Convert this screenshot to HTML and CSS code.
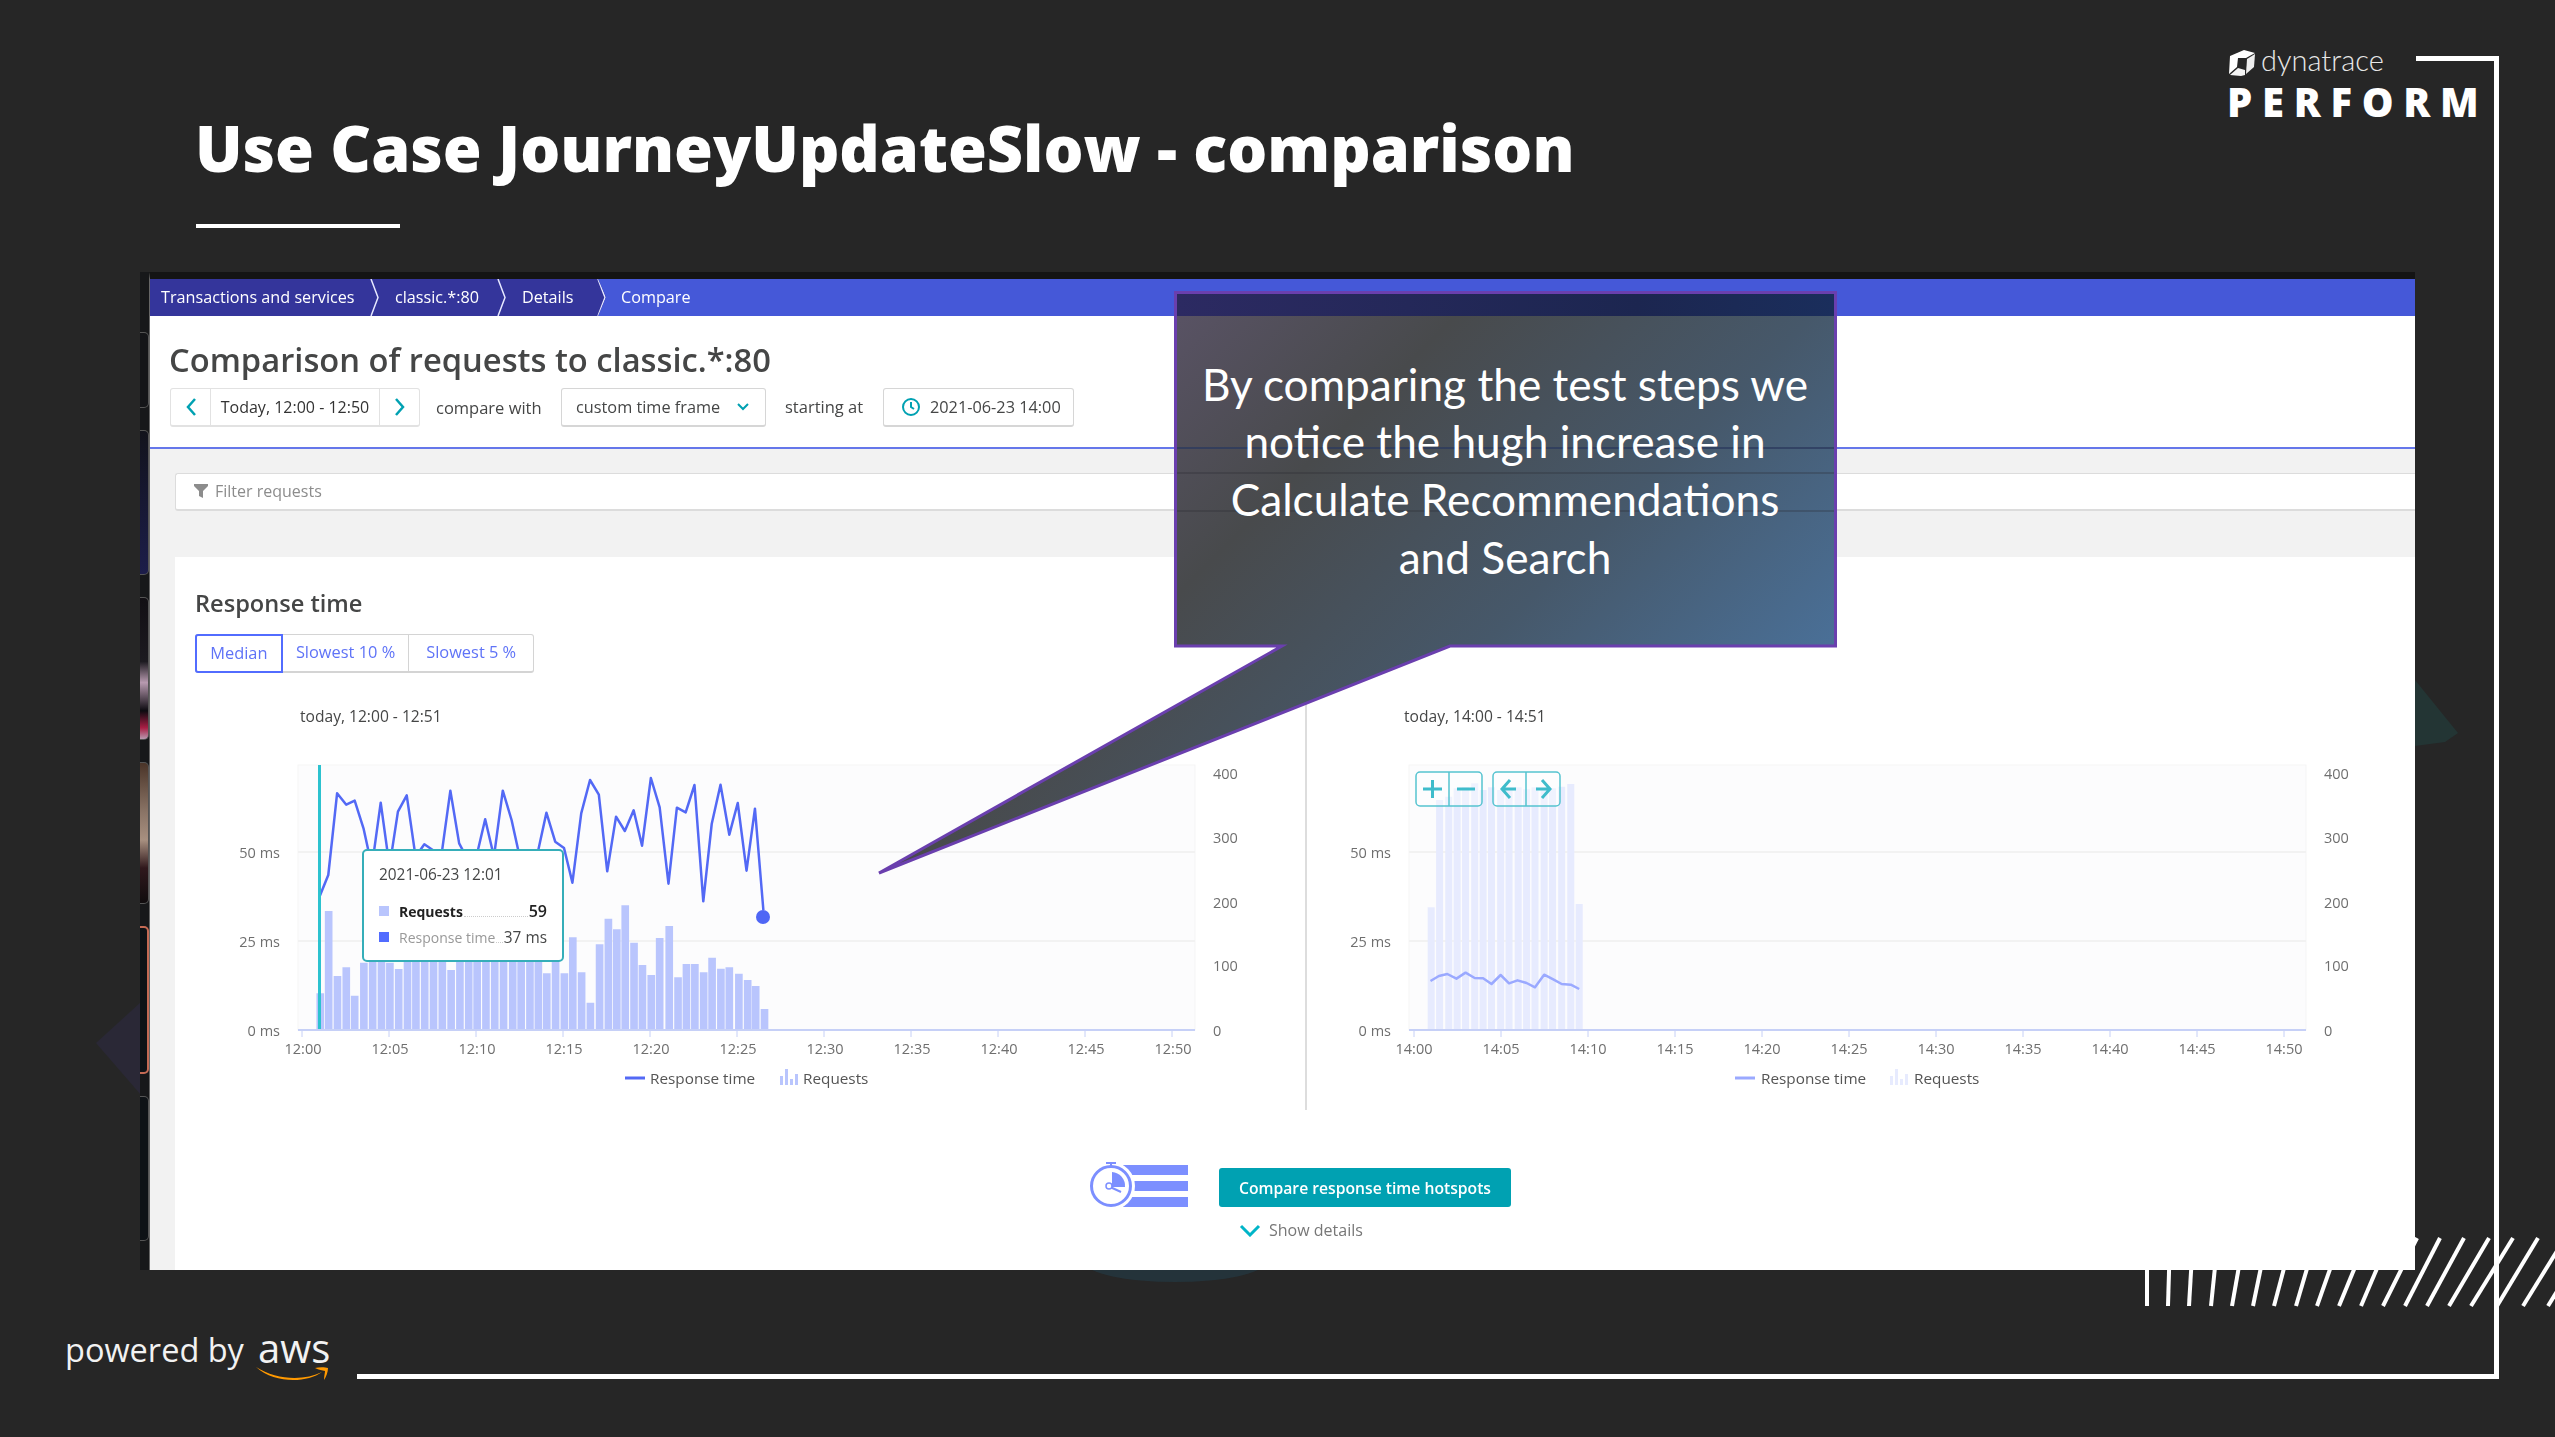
FILE: index.html
```html
<!DOCTYPE html>
<html lang="en">
<head>
    <meta charset="UTF-8">
    <title>Use Case JourneyUpdateSlow - comparison</title>
    <link rel="stylesheet" href="styles.css">
</head>
<body>
    <!-- slide decoration: faint shapes, hatching, white frame -->
    <svg class="backdrop" viewBox="0 0 2555 1437">
        <polygon points="96,1043 141,1002 141,1095" fill="#2a2836"/>
        <polygon points="2415,680 2458,733 2445,742 2415,746" fill="#233534"/>
        <ellipse cx="1175" cy="1262" rx="90" ry="20" fill="#24333a"/>
        <g stroke="#fff" stroke-width="4">
            <line x1="2147" y1="1306" x2="2147" y2="1238"/>
            <line x1="2168" y1="1306" x2="2170" y2="1238"/>
            <line x1="2189" y1="1306" x2="2193" y2="1238"/>
            <line x1="2211" y1="1306" x2="2218" y2="1238"/>
            <line x1="2232" y1="1306" x2="2244" y2="1238"/>
            <line x1="2253" y1="1306" x2="2267" y2="1238"/>
            <line x1="2274" y1="1306" x2="2292" y2="1238"/>
            <line x1="2296" y1="1306" x2="2316" y2="1238"/>
            <line x1="2317" y1="1306" x2="2341" y2="1238"/>
            <line x1="2339" y1="1306" x2="2367" y2="1238"/>
            <line x1="2361" y1="1306" x2="2390" y2="1238"/>
            <line x1="2383" y1="1306" x2="2417" y2="1238"/>
            <line x1="2405" y1="1306" x2="2440" y2="1238"/>
            <line x1="2427" y1="1306" x2="2464" y2="1238"/>
            <line x1="2449" y1="1306" x2="2489" y2="1238"/>
            <line x1="2471" y1="1306" x2="2513" y2="1238"/>
            <line x1="2497" y1="1306" x2="2538" y2="1238"/>
            <line x1="2523" y1="1306" x2="2565" y2="1238"/>
            <line x1="2548" y1="1306" x2="2590" y2="1238"/>
        </g>
        <path d="M2416 58.500H2496.500V1376.500H357" fill="none" stroke="#fff" stroke-width="5"/>
    </svg>

    <header class="slide-head">
        <div class="slide-title">
            <h1>Use Case JourneyUpdateSlow - comparison</h1>
            <div class="title-rule"></div>
        </div>
        <div class="brand">
            <div class="brand-top">
                <svg class="brand-cube" viewBox="0 0 27 26">
                    <path d="M2 6 16 0l11 3-9 5-8 0-1 9-8 7z" fill="#fff"/>
                    <path d="M19 9l8-5-1 13-8 7z" fill="#eee"/>
                    <path d="M2 25l8-7 7 2v5l-4 1z" fill="#f4f4f4"/>
                </svg>
                <span class="brand-name">dynatrace</span>
            </div>
            <div class="brand-event">PERFORM</div>
        </div>
    </header>

    <div class="screen-row">
        <div class="thumbs">
            <div class="thumb thumb-1"></div>
            <div class="thumb thumb-2"></div>
            <div class="thumb thumb-3"></div>
            <div class="thumb thumb-4"></div>
            <div class="thumb thumb-5"></div>
            <div class="thumb thumb-6"></div>
        </div>
        <div class="screen">
            <nav class="navbar">
                <div class="crumbs">
                    <a class="crumb crumb-first">Transactions and services</a>
                    <svg class="crumb-sep" viewBox="0 0 10 37"><path d="M1 0l7 18.500L1 37"/></svg>
                    <a class="crumb crumb-second">classic.*:80</a>
                    <svg class="crumb-sep" viewBox="0 0 10 37"><path d="M1 0l7 18.500L1 37"/></svg>
                    <a class="crumb crumb-third">Details</a>
                    <svg class="crumb-sep" viewBox="0 0 10 37"><path d="M1 0l7 18.500L1 37"/></svg>
                </div>
                <a class="crumb crumb-current">Compare</a>
            </nav>

            <section class="page-head">
                <h2>Comparison of requests to classic.*:80</h2>
                <div class="controls">
                    <div class="date-nav">
                        <span class="date-arrow">
                            <svg viewBox="0 0 12 20"><path d="M10 2 3 10l7 8"/></svg>
                        </span>
                        <span class="date-value">Today, 12:00 - 12:50</span>
                        <span class="date-arrow">
                            <svg viewBox="0 0 12 20"><path d="M2 2l7 8-7 8"/></svg>
                        </span>
                    </div>
                    <span class="control-label label-compare">compare with</span>
                    <div class="select-box">
                        <span>custom time frame</span>
                        <svg viewBox="0 0 12 8"><path d="M1 1l5 5 5-5"/></svg>
                    </div>
                    <span class="control-label label-start">starting at</span>
                    <div class="time-box">
                        <svg viewBox="0 0 20 20">
                            <circle cx="10" cy="10" r="8"/>
                            <path d="M10 5v5l3 2"/>
                        </svg>
                        <span>2021-06-23 14:00</span>
                    </div>
                </div>
            </section>

            <main class="content">
                <div class="filter-bar">
                    <svg viewBox="0 0 14 14"><path d="M0 0h14v2L9 7v7L5 12V7L0 2z"/></svg>
                    <span>Filter requests</span>
                </div>

                <section class="card">
                    <h3>Response time</h3>
                    <div class="tabs">
                        <span class="tab tab-active">Median</span>
                        <span class="tab tab-ten">Slowest 10 %</span>
                        <span class="tab tab-five">Slowest 5 %</span>
                    </div>

                    <div class="charts">
                        <div class="chart-panel chart-left">
                            <svg class="chart" width="1130" height="420" viewBox="175 700 1130 420">
                                <text class="date" x="300" y="722">today, 12:00 - 12:51</text>
                                <rect class="plot" x="298" y="765" width="897" height="265"/>
                                <path class="grid" d="M298 852H1195M298 941H1195"/>
                                <svg x="220" y="700" width="600" height="420" viewBox="0 0 1568 1260" preserveAspectRatio="none">
                                    <path class="bars" d="M252 990V880h20V990zM274 990V633h20V990zM297 990V828h20V990zM320 990V802h20V990zM342 990V887h20V990zM366 990V788h20V990zM389 990V760h20V990zM412 990V760h20V990zM434 990V788h20V990zM457 990V807h20V990zM480 990V785h20V990zM502 990V760h20V990zM525 990V760h20V990zM548 990V785h20V990zM571 990V785h20V990zM594 990V810h20V990zM617 990V785h20V990zM640 990V760h20V990zM662 990V760h20V990zM685 990V760h20V990zM708 990V760h20V990zM731 990V785h20V990zM755 990V760h20V990zM777 990V785h20V990zM800 990V760h20V990zM822 990V785h20V990zM844 990V820h20V990zM867 990V785h20V990zM890 990V820h20V990zM912 990V712h20V990zM935 990V817h20V990zM958 990V908h20V990zM982 990V733h20V990zM1005 990V656h20V990zM1027 990V688h20V990zM1049 990V616h20V990zM1072 990V728h20V990zM1094 990V795h20V990zM1117 990V825h20V990zM1139 990V714h20V990zM1164 990V678h20V990zM1187 990V832h20V990zM1209 990V792h20V990zM1231 990V792h20V990zM1254 990V817h20V990zM1276 990V773h20V990zM1299 990V806h20V990zM1321 990V802h20V990zM1346 990V821h20V990zM1369 990V840h20V990zM1390 990V858h20V990zM1413 990V927h20V990z"/>
                                    <polyline class="line" points="260,590 283,525 306,280 330,314 352,302 375,385 397,500 420,308 443,500 465,335 488,286 511,470 534,433 556,450 580,455 602,272 625,430 648,480 670,470 693,358 716,470 739,272 762,360 785,480 808,470 830,460 853,338 876,425 899,444 921,548 944,340 967,240 990,284 1012,514 1035,350 1058,393 1081,331 1103,437 1126,234 1149,322 1172,551 1194,323 1217,337 1240,255 1263,604 1285,372 1308,254 1331,404 1353,309 1376,512 1398,326 1420,630"/>
                                </svg>
                                <line class="cursor" x1="319.500" y1="765" x2="319.500" y2="1030"/>
                                <circle class="dot" cx="763" cy="917" r="7"/>
                                <path class="axis" d="M298 1030H1195"/>
                                <path class="ticks" d="M302 1030v7M389 1030v7M476 1030v7M563 1030v7M650 1030v7M737 1030v7M824 1030v7M911 1030v7M998 1030v7M1085 1030v7M1172 1030v7"/>
                                <g class="y-left">
                                    <text x="280" y="858">50 ms</text>
                                    <text x="280" y="947">25 ms</text>
                                    <text x="280" y="1036">0 ms</text>
                                </g>
                                <g class="x-axis">
                                    <text x="303" y="1054">12:00</text>
                                    <text x="390" y="1054">12:05</text>
                                    <text x="477" y="1054">12:10</text>
                                    <text x="564" y="1054">12:15</text>
                                    <text x="651" y="1054">12:20</text>
                                    <text x="738" y="1054">12:25</text>
                                    <text x="825" y="1054">12:30</text>
                                    <text x="912" y="1054">12:35</text>
                                    <text x="999" y="1054">12:40</text>
                                    <text x="1086" y="1054">12:45</text>
                                    <text x="1173" y="1054">12:50</text>
                                </g>
                                <g class="y-right">
                                    <text x="1213" y="779">400</text>
                                    <text x="1213" y="843">300</text>
                                    <text x="1213" y="908">200</text>
                                    <text x="1213" y="971">100</text>
                                    <text x="1213" y="1036">0</text>
                                </g>
                                <path class="legend-line" d="M625 1078H645"/>
                                <text class="legend" x="650" y="1084">Response time</text>
                                <path class="legend-bars" d="M780 1085v-9h3v9zM785 1085v-16h3v16zM790 1085v-6h3v6zM795 1085v-11h3v11z"/>
                                <text class="legend" x="803" y="1084">Requests</text>
                            </svg>

                            <div class="tooltip">
                                <div class="tooltip-date">2021-06-23 12:01</div>
                                <div class="tooltip-row tooltip-strong">
                                    <i class="swatch swatch-bars"></i>
                                    <span>Requests</span>
                                    <b class="leader"></b>
                                    <span class="tooltip-count">59</span>
                                </div>
                                <div class="tooltip-row">
                                    <i class="swatch swatch-line"></i>
                                    <span class="muted">Response time</span>
                                    <b class="leader"></b>
                                    <span>37 ms</span>
                                </div>
                            </div>
                        </div>

                        <div class="chart-panel chart-right">
                            <svg class="chart" width="1110" height="420" viewBox="1305 700 1110 420">
                                <text class="date" x="1404" y="722">today, 14:00 - 14:51</text>
                                <rect class="plot" x="1409" y="765" width="897" height="265"/>
                                <path class="grid" d="M1409 852H2306M1409 941H2306"/>
                                <svg x="1300" y="700" width="1100" height="420" viewBox="0 0 1568 1260" preserveAspectRatio="none">
                                    <path class="bars-faded" d="M182 990V622h10V990zM194 990V300h10V990zM207 990V290h10V990zM219 990V265h10V990zM231 990V262h10V990zM244 990V250h10V990zM256 990V270h10V990zM268 990V262h10V990zM281 990V270h10V990zM293 990V265h10V990zM306 990V262h10V990zM318 990V268h10V990zM330 990V262h10V990zM343 990V270h10V990zM355 990V265h10V990zM368 990V260h10V990zM381 990V252h10V990zM393 990V612h10V990z"/>
                                    <polyline class="line-faded" points="186,843 198,828 210,822 223,836 236,818 249,834 261,835 273,852 286,825 298,850 310,841 323,849 335,862 348,824 361,838 373,852 386,854 398,867"/>
                                </svg>
                                <path class="axis" d="M1409 1030H2306"/>
                                <path class="ticks" d="M1414 1030v7M1501 1030v7M1588 1030v7M1675 1030v7M1762 1030v7M1849 1030v7M1936 1030v7M2023 1030v7M2110 1030v7M2197 1030v7M2284 1030v7"/>

                                <g class="zoom-box">
                                    <rect x="1416" y="772" width="66" height="34" rx="4"/>
                                    <rect x="1493" y="772" width="67" height="34" rx="4"/>
                                    <path d="M1449 772v34M1526 772v34"/>
                                </g>
                                <path class="zoom-icon" d="M1432.500 780v18M1423 789h19M1457 789h18M1510 780l-8 9 8 9M1502 789h14M1542 780l8 9-8 9M1550 789h-14"/>

                                <g class="y-left">
                                    <text x="1391" y="858">50 ms</text>
                                    <text x="1391" y="947">25 ms</text>
                                    <text x="1391" y="1036">0 ms</text>
                                </g>
                                <g class="x-axis">
                                    <text x="1414" y="1054">14:00</text>
                                    <text x="1501" y="1054">14:05</text>
                                    <text x="1588" y="1054">14:10</text>
                                    <text x="1675" y="1054">14:15</text>
                                    <text x="1762" y="1054">14:20</text>
                                    <text x="1849" y="1054">14:25</text>
                                    <text x="1936" y="1054">14:30</text>
                                    <text x="2023" y="1054">14:35</text>
                                    <text x="2110" y="1054">14:40</text>
                                    <text x="2197" y="1054">14:45</text>
                                    <text x="2284" y="1054">14:50</text>
                                </g>
                                <g class="y-right">
                                    <text x="2324" y="779">400</text>
                                    <text x="2324" y="843">300</text>
                                    <text x="2324" y="908">200</text>
                                    <text x="2324" y="971">100</text>
                                    <text x="2324" y="1036">0</text>
                                </g>
                                <path class="legend-line-faded" d="M1735 1078H1755"/>
                                <text class="legend" x="1761" y="1084">Response time</text>
                                <path class="legend-bars-faded" d="M1890 1085v-9h3v9zM1895 1085v-16h3v16zM1900 1085v-6h3v6zM1905 1085v-11h3v11z"/>
                                <text class="legend" x="1914" y="1084">Requests</text>
                            </svg>
                        </div>
                    </div>

                    <div class="hotspots">
                        <svg class="hotspot-icon" viewBox="0 0 98 46">
                            <path class="hotspot-fill" d="M33 3h65v10H33zM44 19h54v10H44zM33 35h65v10H33z"/>
                            <circle class="hotspot-white" cx="21" cy="24" r="24"/>
                            <circle class="hotspot-ring" cx="21" cy="24" r="19.500"/>
                            <path class="hotspot-fill" d="M22 10a14 14 0 0 1 13 15l-13 0z"/>
                            <path class="hotspot-hand" d="M18 24l13 6"/>
                            <circle class="hotspot-pin" cx="19" cy="24" r="3"/>
                            <path class="hotspot-hand" d="M21 1v3M16 1h10"/>
                        </svg>
                        <div class="hotspot-actions">
                            <button class="hotspot-btn">Compare response time hotspots</button>
                            <div class="show-details">
                                <svg viewBox="0 0 22 13"><path d="M2 2l9 9 9-9"/></svg>
                                <span>Show details</span>
                            </div>
                        </div>
                    </div>
                </section>
            </main>
        </div>
    </div>

    <footer class="slide-foot">
        <span class="powered">powered by</span>
        <div class="aws">
            <span class="aws-name">aws</span>
            <svg class="aws-smile" viewBox="0 0 74 18">
                <path d="M1 1c20 13 48 14 66 5-15 11-47 12-66-5z"/>
                <path d="M60 2c4-1 10-1 13 0 0 4-2 9-4 12 0-4 1-7 1-9-3-1-6-1-10-3z"/>
            </svg>
        </div>
    </footer>

    <!-- speech bubble laid over the screenshot -->
    <div class="callout">
        <svg viewBox="879 292 958 581">
            <defs>
                <linearGradient id="calloutFill" gradientUnits="userSpaceOnUse" x1="1175" y1="292" x2="1683.500" y2="800.500">
                    <stop offset="0" stop-color="#5a5366"/>
                    <stop offset="0.3" stop-color="#484a4c"/>
                    <stop offset="0.65" stop-color="#46586a"/>
                    <stop offset="1" stop-color="#4a7098"/>
                </linearGradient>
                <linearGradient id="calloutBand" x1="0" y1="0" x2="1" y2="0">
                    <stop offset="0" stop-color="#2c2a62"/>
                    <stop offset="0.7" stop-color="#1c2650"/>
                    <stop offset="1" stop-color="#1a2e5c"/>
                </linearGradient>
            </defs>
            <polygon class="callout-shape" points="1175.500,292.500 1835.500,292.500 1835.500,646 1450,646 879,873 1282,646 1175.500,646"/>
            <rect x="1177" y="294" width="657" height="22" fill="url(#calloutBand)"/>
            <path class="callout-seams" d="M1177 448H1834"/>
            <path class="callout-seams-faint" d="M1177 473H1834M1177 511H1834"/>
            <polygon class="callout-outline" points="1175.500,292.500 1835.500,292.500 1835.500,646 1450,646 879,873 1282,646 1175.500,646"/>
        </svg>
        <p class="callout-text">By comparing the test steps we<br>notice the hugh increase in<br>Calculate Recommendations<br>and Search</p>
    </div>
</body>
</html>
```

FILE: styles.css
```css
* {
    margin: 0;
    padding: 0;
    box-sizing: border-box;
}

html, body {
    width: 2555px;
    height: 1437px;
    overflow: hidden;
}

body {
    position: relative;
    background-color: #262626;
    font-family: "Open Sans", "Liberation Sans", sans-serif;
}

.backdrop {
    position: absolute;
    left: 0;
    top: 0;
    width: 2555px;
    height: 1437px;
}

/* slide header */
.slide-head {
    position: relative;
    height: 272px;
    display: flex;
    justify-content: space-between;
    padding: 50px 77px 0 196px;
}

.slide-title h1 {
    margin: 58px 0 0 -1px;
    font-size: 62.900px;
    line-height: 80px;
    font-weight: 800;
    color: #fff;
    white-space: nowrap;
}

.title-rule {
    width: 204px;
    height: 4px;
    margin-top: 36px;
    background-color: #fff;
}

.brand {
    width: 250px;
}

.brand-top {
    display: flex;
    align-items: center;
    height: 26px;
    gap: 6px;
}

.brand-cube {
    width: 27px;
    height: 26px;
}

.brand-name {
    margin-top: -6px;
    font-family: "Lato", sans-serif;
    font-weight: 300;
    font-size: 29px;
    line-height: 26px;
    color: #e8e8e8;
}

.brand-event {
    margin: 11px 0 0 -1px;
    font-size: 40px;
    line-height: 30px;
    font-weight: 800;
    letter-spacing: 9.700px;
    color: #fff;
    white-space: nowrap;
}

/* recorded screen */
.screen-row {
    position: relative;
    display: flex;
    margin-left: 140px;
    height: 998px;
}

.thumbs {
    width: 9px;
    display: flex;
    flex-direction: column;
    gap: 22px;
    padding-top: 60px;
    background-color: #17181a;
}

.thumb {
    border: 1px solid #555;
    border-left: 0;
    border-radius: 0 5px 5px 0;
}

.thumb-1 { height: 76px; background-color: #141518; }
.thumb-2 { height: 145px; background: linear-gradient(#12131c, #1c1d4a); }
.thumb-3 { height: 143px; background: linear-gradient(#120f14 0%, #1c1a20 45%, #b89ab0 60%, #0c0a10 80%, #a81e44 92%, #b89ab0 100%); }
.thumb-4 { height: 142px; background: linear-gradient(#4a3428 0%, #8a7466 35%, #a89080 55%, #30181c 75%, #100c0e 100%); }
.thumb-5 { height: 148px; background-color: #0e1216; border: 2px solid #c46a54; border-left: 0; }
.thumb-6 { height: 145px; background-color: #0e1216; }

.screen {
    width: 2266px;
    height: 998px;
    border-top: 7px solid #141414;
    border-left: 1px solid #666;
    display: flex;
    flex-direction: column;
    background-color: #fff;
    filter: blur(0.5px);
}

.navbar {
    height: 37px;
    display: flex;
    flex-shrink: 0;
    background-color: #4558d8;
    color: #fff;
    font-size: 16.200px;
    line-height: 37px;
}

.crumbs {
    display: flex;
    background-color: #34359b;
    clip-path: polygon(0 0, 448px 0, 456px 18px, 448px 37px, 0 37px);
}

.crumb {
    white-space: nowrap;
}

.crumb-first { width: 220px; padding-left: 11px; }
.crumb-second { width: 117px; padding-left: 15px; }
.crumb-third { width: 90px; padding-left: 15px; }
.crumb-current { padding-left: 14px; }

.crumb-sep {
    width: 10px;
    height: 37px;
    flex-shrink: 0;
    fill: none;
    stroke: #e6e8ff;
    stroke-width: 1.500;
}

.page-head {
    height: 133px;
    flex-shrink: 0;
    padding: 27px 0 0 20px;
    border-bottom: 2px solid #6577ea;
}

.page-head h2 {
    margin-left: -1px;
    font-size: 32.700px;
    line-height: 33px;
    font-weight: 600;
    color: #454646;
}

.controls {
    display: flex;
    align-items: center;
    height: 39px;
    margin-top: 12px;
    font-size: 16.300px;
    color: #454646;
}

.date-nav {
    display: flex;
    width: 250px;
    height: 39px;
    border: 1px solid #e2e2e2;
    border-bottom-width: 2px;
    border-radius: 3px;
    font-size: 16px;
}

.date-arrow {
    width: 39px;
    display: flex;
    align-items: center;
    justify-content: center;
}

.date-arrow svg {
    width: 12px;
    height: 20px;
    fill: none;
    stroke: #00a1b2;
    stroke-width: 2.500;
}

.date-value {
    flex: 1;
    text-align: center;
    line-height: 36px;
    color: #333;
    border-left: 1px solid #e2e2e2;
    border-right: 1px solid #e2e2e2;
    white-space: nowrap;
}

.control-label {
    white-space: nowrap;
}

.label-compare { margin-left: 16px; width: 125px; font-size: 16.500px; }
.label-start { margin-left: 19px; width: 98px; font-size: 16.500px; padding-bottom: 2px; }

.select-box,
.time-box {
    display: flex;
    align-items: center;
    height: 39px;
    border: 1px solid #d6d6d6;
    border-bottom-width: 2px;
    border-radius: 3px;
    white-space: nowrap;
}

.select-box {
    width: 205px;
    padding-left: 14px;
    justify-content: space-between;
    padding-right: 16px;
}

.select-box svg {
    width: 12px;
    height: 8px;
    fill: none;
    stroke: #00a1b2;
    stroke-width: 2;
}

.time-box {
    width: 191px;
    padding-left: 17px;
    gap: 9px;
}

.time-box svg {
    width: 20px;
    height: 20px;
    fill: none;
    stroke: #00a1b2;
    stroke-width: 2;
}

.content {
    flex: 1;
    padding: 24px 0 0 25px;
    background-color: #f2f2f2;
    display: flex;
    flex-direction: column;
}

.filter-bar {
    height: 38px;
    display: flex;
    align-items: center;
    gap: 7px;
    padding: 0 0 2px 18px;
    background-color: #fff;
    border: 1px solid #dcdcdc;
    border-right: 0;
    border-bottom-width: 2px;
    border-radius: 3px 0 0 3px;
    font-size: 16px;
    color: #8c8c8c;
}

.filter-bar svg {
    width: 14px;
    height: 14px;
    fill: #8c8c8c;
}

.card {
    flex: 1;
    margin-top: 46px;
    background-color: #fff;
}

.card h3 {
    margin: 31px 0 0 20px;
    font-size: 23.600px;
    line-height: 30px;
    font-weight: 600;
    color: #454646;
}

.tabs {
    display: flex;
    width: 339px;
    height: 39px;
    margin: 16px 0 0 20px;
    border: 1px solid #d4d4d4;
    border-bottom-width: 2px;
    border-radius: 3px;
    font-size: 16.400px;
    line-height: 33px;
    color: #5f73f7;
}

.tab {
    text-align: center;
    white-space: nowrap;
}

.tab-active {
    width: 88px;
    margin: -1px 0 -2px -1px;
    line-height: 33px;
    border: 2px solid #526cff;
    border-radius: 3px 0 0 3px;
}

.tab-ten { width: 126px; }
.tab-five { width: 125px; border-left: 1px solid #d4d4d4; }

.charts {
    display: flex;
    margin-top: 27px;
}

.chart-panel {
    position: relative;
    height: 420px;
}

.chart {
    display: block;
}

.chart-right::before {
    content: "";
    position: absolute;
    left: 0;
    top: 0;
    width: 2px;
    height: 410px;
    background-color: #ddd;
}

.chart text {
    font-family: "Open Sans", "Liberation Sans", sans-serif;
    font-size: 14.500px;
    fill: #6f6f6f;
}

.chart .date {
    font-size: 15.600px;
    fill: #454646;
}

.chart .legend {
    font-size: 15.300px;
    fill: #555;
}

.x-axis text {
    text-anchor: middle;
}

.y-left text {
    text-anchor: end;
}

.plot {
    fill: #fcfcfd;
    stroke: #f5f5f5;
}

.grid {
    stroke: #f2f2f2;
    stroke-width: 2;
}

.bars { fill: #b9c5fd; }
.bars-faded { fill: #e7ebfe; }

.line,
.line-faded {
    fill: none;
    stroke-width: 2.500;
    vector-effect: non-scaling-stroke;
    stroke-linejoin: round;
}

.line { stroke: #5369f5; }
.line-faded { stroke: #9aa9ff; }

.cursor {
    stroke: #2cc2cf;
    stroke-width: 3;
}

.dot { fill: #4f66f5; }

.axis {
    stroke: #c6d0f7;
    stroke-width: 2;
}

.ticks {
    stroke: #c6d0f7;
    stroke-width: 1;
}

.legend-line { stroke: #5369f5; stroke-width: 3; }
.legend-line-faded { stroke: #9aa9ff; stroke-width: 3; }
.legend-bars { fill: #b9c5fd; }
.legend-bars-faded { fill: #e7ebfe; }

.zoom-box rect {
    fill: rgba(255, 255, 255, 0.35);
    stroke: #55c3d0;
    stroke-width: 1.500;
}

.zoom-box path {
    stroke: #55c3d0;
    stroke-width: 1.500;
}

.zoom-icon {
    fill: none;
    stroke: #3fbccb;
    stroke-width: 3;
}

.tooltip {
    position: absolute;
    left: 187px;
    top: 149px;
    width: 202px;
    height: 113px;
    padding: 14px 15px 0;
    background-color: #fff;
    border: 2px solid #35aeb9;
    border-radius: 5px;
    font-size: 15.400px;
    color: #454646;
}

.tooltip-date {
    line-height: 20px;
    margin-bottom: 13px;
}

.tooltip-row {
    display: flex;
    align-items: center;
    height: 26px;
    white-space: nowrap;
}

.tooltip-strong {
    font-weight: 700;
    font-size: 14px;
    color: #222;
}

.tooltip-count {
    font-size: 16px;
    font-weight: 600;
}

.swatch {
    width: 10px;
    height: 10px;
    margin-right: 10px;
}

.swatch-bars { background-color: #b9c5fd; }
.swatch-line { background-color: #526cff; }

.leader {
    flex: 1;
    height: 12px;
    margin: 0 1px;
    border-bottom: 1px dotted #ccc;
}

.muted {
    font-size: 14px;
    color: #999;
}

.hotspots {
    display: flex;
    gap: 31px;
    margin-top: 42px;
    padding-left: 915px;
}

.hotspot-icon {
    width: 98px;
    height: 46px;
    overflow: visible;
}

.hotspot-fill { fill: #7c8fff; }
.hotspot-white { fill: #fff; }

.hotspot-ring {
    fill: #fff;
    stroke: #7c8fff;
    stroke-width: 3;
}

.hotspot-hand {
    fill: none;
    stroke: #7c8fff;
    stroke-width: 2;
}

.hotspot-pin {
    fill: #fff;
    stroke: #7c8fff;
    stroke-width: 1.500;
}

.hotspot-actions {
    margin-top: 6px;
}

.hotspot-btn {
    display: block;
    width: 292px;
    height: 39px;
    border: 0;
    border-radius: 3px;
    background-color: #00a1b2;
    color: #fff;
    font-family: "Open Sans", "Liberation Sans", sans-serif;
    font-size: 15.700px;
    font-weight: 600;
}

.show-details {
    display: flex;
    align-items: center;
    gap: 8px;
    margin: 12px 0 0 20px;
    font-size: 16px;
    color: #777;
}

.show-details svg {
    width: 22px;
    height: 13px;
    fill: none;
    stroke: #00b5c8;
    stroke-width: 3;
}

/* slide footer */
.slide-foot {
    position: relative;
    display: flex;
    gap: 14px;
    margin-top: 58px;
    padding-left: 65px;
    color: #f2f2f2;
}

.powered {
    font-size: 32.500px;
    line-height: 44px;
    white-space: nowrap;
}

.aws {
    position: relative;
    width: 74px;
}

.aws-name {
    display: block;
    font-size: 40px;
    line-height: 40px;
    font-weight: 400;
}

.aws-smile {
    display: block;
    width: 74px;
    height: 18px;
    margin: -2px 0 0 -3px;
    fill: #f90;
}

/* speech bubble */
.callout {
    position: absolute;
    left: 879px;
    top: 292px;
    width: 958px;
    height: 581px;
}

.callout svg {
    display: block;
    width: 958px;
    height: 581px;
    overflow: visible;
}

.callout-shape {
    fill: url(#calloutFill);
}

.callout-outline {
    fill: none;
    stroke: #6a3fae;
    stroke-width: 3;
}

.callout-seams {
    stroke: #2b3a5e;
    stroke-width: 1.500;
}

.callout-seams-faint {
    stroke: rgba(40, 40, 50, 0.35);
    stroke-width: 1.500;
}

.callout-text {
    position: absolute;
    left: 295px;
    top: 62.500px;
    width: 662px;
    font-family: "Lato", sans-serif;
    font-size: 44.200px;
    line-height: 57.700px;
    text-align: center;
    color: #fff;
}
```
